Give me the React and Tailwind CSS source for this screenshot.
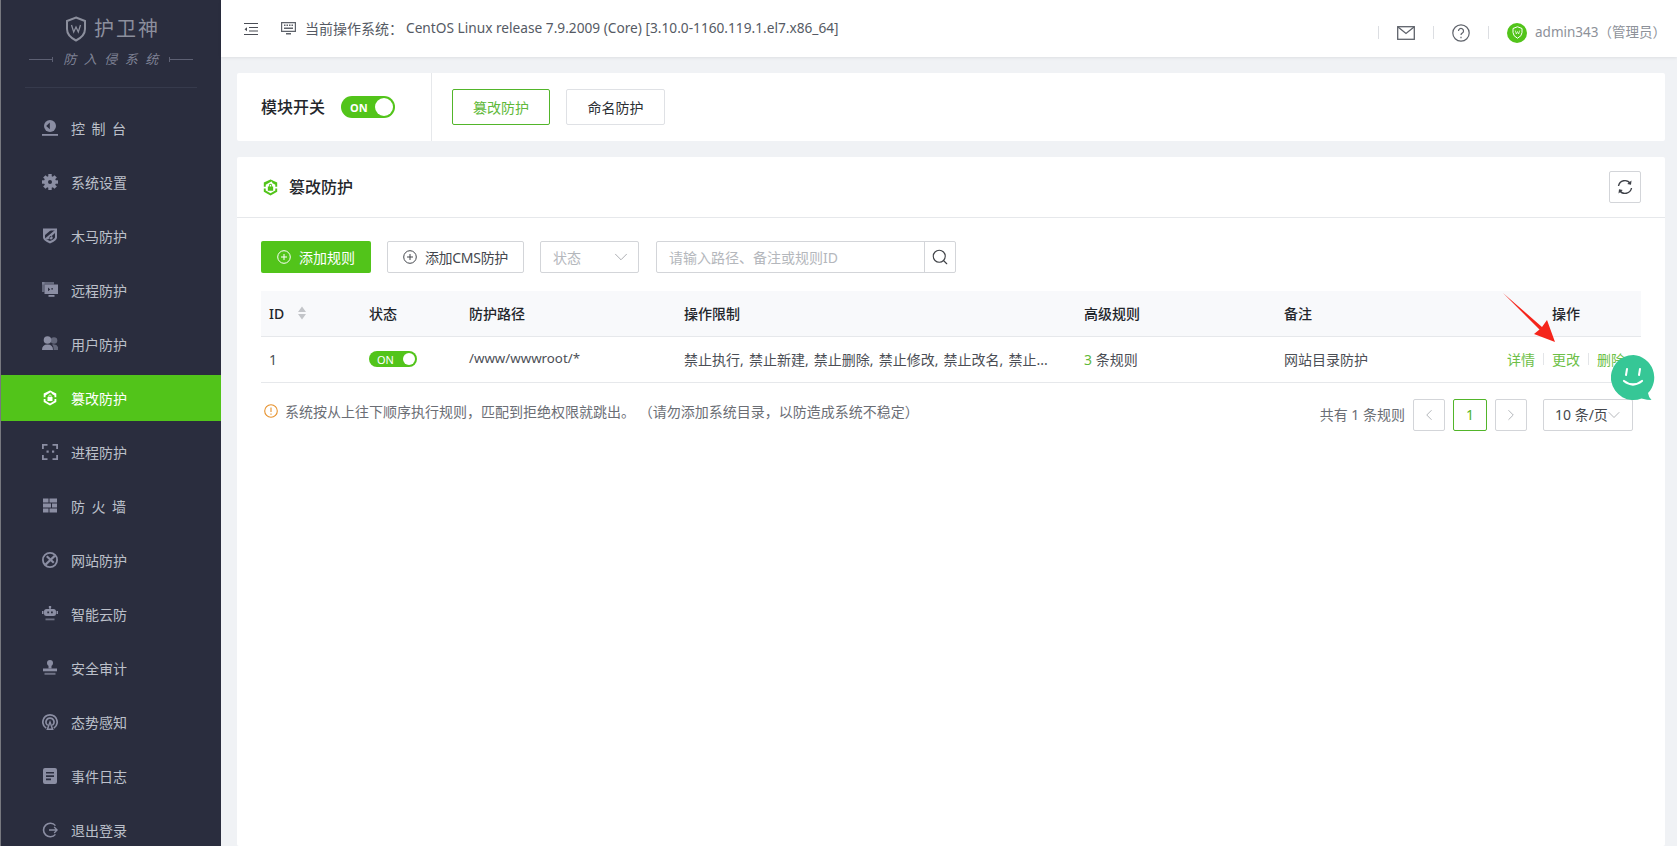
import React from 'react'
import { ChevronDown, ChevronLeft, ChevronRight, Search } from 'lucide-react'

const font = 'font-["Noto_Sans","Noto_Sans_CJK_SC",sans-serif]'

const gearTeeth = [0, 45, 90, 135, 180, 225, 270, 315]

// sidebar icons, all drawn on a 16 box
const icons = {
  console: <><circle cx="8" cy="6" r="6" /><path d="M7.800 2.500L4.200 6L7.800 9.300z" fill="#2a2d3e" /><rect x="0" y="14" width="16" height="1.800" /></>,
  gear: <><circle cx="8" cy="8" r="6" />{gearTeeth.map((a) => <rect key={a} x="6.300" y="0" width="3.400" height="3.500" transform={`rotate(${a} 8 8)`} />)}<circle cx="8" cy="8" r="2" fill="#2a2d3e" /></>,
  shield: <><path fillRule="evenodd" d="M1 0.500h14v9q0 3-7 6q-7-3-7-6z M3 2.500v6.800q0 1.500 5 3.800q5-2.300 5-3.800v-6.800z" /><path d="M3 10.500l10-8.500v3l-7 6.500z M9 8a1.700 1.700 0 1 0 .1 0z M3 2h6l-6 5z" /></>,
  remote: <><rect x="0" y="0" width="12" height="2.500" opacity="0.6" /><rect x="0" y="0" width="2.500" height="10" opacity="0.6" /><path fillRule="evenodd" d="M2.500 2.500h13.500v9.500h-13.500z M6 5.500v3.800l2.200-1.900z M9.300 6.300v1.300h1.700v-1.300z" /><rect x="6.500" y="13" width="6" height="1.800" /></>,
  users: <><circle cx="5.500" cy="4" r="3.800" /><path d="M0 14q0-5.500 5.500-5.500t5.500 5.500z" /><circle cx="12" cy="4.500" r="3.300" opacity="0.6" /><path d="M11.500 14q.5-3.500-1.500-5.500q6.500-1 6.500 5.500z" opacity="0.6" /></>,
  tamper: <><path d="M8 0.500l2 1.200-2 1.100-4.500 2.600v1.800h-1.800v-3.800z" /><path d="M8 0.500l6.300 2.900v3.800h-1.800v-1.800l-2.500-1.500z" /><path d="M1.700 9h1.800v1.800l4.500 2.600 4.500-2.600v-1.800h1.800v3l-6.300 3.600-6.300-3.600z" /><path fillRule="evenodd" d="M5.500 7h1v-1a1.500 1.500 0 0 1 3 0v1h1v4h-5z M7.300 7h1.400v-1a.7.700 0 0 0-1.400 0z" /></>,
  process: <><path d="M0 0h5.500v1.800h-3.700v3.200h-1.800z M10.500 0h5.500v5h-1.800v-3.200h-3.700z M0 11h1.800v3.200h3.700v1.800h-5.500z M14.200 11h1.800v5h-5.500v-1.800h3.700z" /><rect x="4.500" y="6.500" width="2.200" height="2.200" /><rect x="10" y="6.500" width="2.200" height="2.200" /></>,
  wall: <><path d="M1 0.500h5.500v4h-5.500z M7.500 0.500h7.500v4h-7.500z M1 5.500h8v4h-8z M10 5.500h5v4h-5z M1 10.500h5.500v4h-5.500z M7.500 10.500h7.500v4h-7.500z" /></>,
  site: <><path fillRule="evenodd" d="M8 0a8 8 0 1 0 0 16a8 8 0 0 0 0-16z M8 1.800a6.200 6.200 0 1 1 0 12.400a6.200 6.200 0 0 1 0-12.400z" /><path d="M2.500 12l9.500-9 1.700 1.500-9.500 9z" /><path d="M5.500 3.500l7 6.500-1.500 1.500-7-6.500z" /></>,
  robot: <><rect x="7.300" y="0" width="1.400" height="3" /><circle cx="8" cy="1" r="1.300" /><path fillRule="evenodd" d="M4.500 3h7a2.500 2.500 0 0 1 2.500 2.500v2a2.500 2.500 0 0 1-2.500 2.500h-7a2.500 2.500 0 0 1-2.500-2.500v-2a2.500 2.500 0 0 1 2.500-2.500z M5.300 5.500v1.800h1.800v-1.800z M9 5.500v1.800h1.800v-1.800z" /><rect x="0" y="5" width="1.500" height="3" /><rect x="14.500" y="5" width="1.500" height="3" /><rect x="3.500" y="12.500" width="9" height="1.800" opacity="0.7" /></>,
  stamp: <><circle cx="8" cy="3" r="3" /><rect x="6.500" y="4" width="3" height="4.500" /><rect x="1" y="8.500" width="14" height="2.800" /><rect x="2.500" y="12.800" width="11" height="2" opacity="0.7" /></>,
  radar: <><path fillRule="evenodd" d="M8 0a8 8 0 0 0-4.300 14.700l.9-1.400a6.300 6.300 0 1 1 6.800 0l.9 1.400a8 8 0 0 0-4.300-14.700z" /><path fillRule="evenodd" d="M8 3.200a4.800 4.800 0 0 0-2.700 8.800l.8-1.300a3.200 3.200 0 1 1 3.800 0l.8 1.300a4.800 4.800 0 0 0-2.700-8.800z" /><path fillRule="evenodd" d="M8 6l3.700 10h-7.400z M8 10l-1.500 4.400h3z" /></>,
  log: <><path fillRule="evenodd" d="M3 0h10a2 2 0 0 1 2 2v12a2 2 0 0 1-2 2h-10a2 2 0 0 1-2-2v-12a2 2 0 0 1 2-2z M4 4v1.600h8v-1.600z M4 7.300v1.600h8v-1.600z M4 10.600v1.600h5v-1.600z" /></>,
  logout: <><path d="M14 3.200a7.500 7.500 0 1 0 0 9.600l-1.100-.9a6 6 0 1 1 0-7.800z" /><path d="M7 7.300h6.500l-1.800-1.800.9-.9 3.400 3.400-3.400 3.400-.9-.9 1.800-1.800h-6.500z" /></>,
}

const menu = [
  { key: 'console', label: '控制台', spaced: true },
  { key: 'gear', label: '系统设置' },
  { key: 'shield', label: '木马防护' },
  { key: 'remote', label: '远程防护' },
  { key: 'users', label: '用户防护' },
  { key: 'tamper', label: '篡改防护', active: true },
  { key: 'process', label: '进程防护' },
  { key: 'wall', label: '防火墙', spaced: true },
  { key: 'site', label: '网站防护' },
  { key: 'robot', label: '智能云防' },
  { key: 'stamp', label: '安全审计' },
  { key: 'radar', label: '态势感知' },
  { key: 'log', label: '事件日志' },
  { key: 'logout', label: '退出登录' },
]

const ShieldMark = ({ className }) => (
  <svg viewBox="0 0 22 26" fill="none" stroke="currentColor" className={className}>
    <path d="M11 1.500l9 3.500v8q0 7-9 11.500q-9-4.500-9-11.500v-8z" strokeWidth="2" />
    <path d="M6.500 9l2.200 7 2.300-5 2.300 5 2.200-7" strokeWidth="1.300" />
  </svg>
)

const PlusCircle = ({ className }) => (
  <svg viewBox="0 0 14 14" fill="none" stroke="currentColor" strokeWidth="1" className={className}>
    <circle cx="7" cy="7" r="6.300" />
    <path d="M7 4v6M4 7h6" />
  </svg>
)

const Toggle = ({ small }) => (
  <div className={small
    ? 'flex h-[16px] w-[48px] items-center justify-between rounded-full bg-[#52c41a] pl-[8px] pr-[2px]'
    : 'flex h-[22px] w-[54px] items-center justify-between rounded-full bg-[#52c41a] pl-[9px] pr-[2px]'}>
    <span className={small ? 'text-[11px] leading-none text-white' : 'text-[11px] font-bold leading-none text-white'}>ON</span>
    <span className={small ? 'h-[12px] w-[12px] rounded-full bg-white' : 'h-[18px] w-[18px] rounded-full bg-white'} />
  </div>
)

const Sidebar = () => (
  <aside className="flex h-full w-[221px] shrink-0 flex-col overflow-hidden border-l border-[#77787f] bg-[#2a2d3e]">
    <div className="mx-[24px] flex h-[88px] shrink-0 flex-col items-center border-b border-[#363a4c] pt-[15px]">
      <div className="flex h-[28px] items-center pl-[3px] text-[#8c8f9d]">
        <ShieldMark className="h-[26px] w-[22px]" />
        <span className="ml-[7px] text-[20px] leading-none tracking-[2px]">护卫神</span>
      </div>
      <div className="mt-[7px] flex items-center text-[#7f8295]">
        <span className="h-px w-[23px] bg-[#5d6073]" />
        <span className="h-[5px] w-px bg-[#5d6073]" />
        <span className="ml-[10px] mr-[3px] text-[13px] italic leading-[18px] tracking-[7.500px]">防入侵系统</span>
        <span className="h-[5px] w-px bg-[#5d6073]" />
        <span className="h-px w-[23px] bg-[#5d6073]" />
      </div>
    </div>
    <nav className="mt-[17px] flex flex-col gap-2">
      {menu.map((m) => (
        <div key={m.key} className={m.active
          ? 'flex h-[46px] shrink-0 items-center bg-[#52c41a] pl-[41px] text-white'
          : 'flex h-[46px] shrink-0 items-center pl-[41px] text-[#bcc0ca]'}>
          <svg viewBox="0 0 16 16" fill="currentColor" className={m.active ? 'h-[16px] w-[16px] text-white' : 'h-[16px] w-[16px] text-[#8b8ea3]'}>
            {icons[m.key]}
          </svg>
          <span className={m.spaced ? 'ml-[13px] text-[14px] tracking-[6.500px]' : 'ml-[13px] text-[14px]'}>{m.label}</span>
        </div>
      ))}
    </nav>
  </aside>
)

const Topbar = () => (
  <header className="flex h-[57px] shrink-0 items-center bg-white pl-[22px] pr-[11px] text-[#555a64] shadow-[0_1px_3px_rgba(0,0,0,0.08)]">
    <svg viewBox="0 0 16 14" fill="none" stroke="#4a4d55" strokeWidth="1.200" className="h-[14px] w-[16px]">
      <path d="M1 1.500h14M6 5.500h9M6 9h9M1 12.500h14" />
      <path d="M4 5.200L1.500 7.200L4 9.200z" fill="#4a4d55" stroke="none" />
    </svg>
    <svg viewBox="0 0 15 15" className="ml-[22px] h-[15px] w-[15px] text-[#5f636b]" fill="currentColor">
      <path fillRule="evenodd" d="M0 1h15v10h-15z M1.200 2.200v7.600h12.600v-7.600z" />
      <path d="M3 3.500h1.500v1.500h-1.500z M5.500 3.500h1.500v1.500h-1.500z M8 3.500h1.500v1.500h-1.500z M10.500 3.500h1.500v1.500h-1.500z M3 6.500h9v1.500h-9z M5 12h5v1.500h-5z" />
    </svg>
    <span className="ml-[9px] text-[14px]">当前操作系统：</span>
    <span className="ml-[3px] text-[13.700px]">CentOS Linux release 7.9.2009 (Core) [3.10.0-1160.119.1.el7.x86_64]</span>
    <div className="ml-auto mt-[8px] flex items-center">
      <span className="h-[13px] w-px bg-[#dcdee2]" />
      <svg viewBox="0 0 18 14" fill="none" stroke="#5f636b" strokeWidth="1.300" className="ml-[18px] h-[14px] w-[18px]">
        <rect x="0.700" y="0.700" width="16.600" height="12.600" />
        <path d="M1 1l8 6.500L17 1" />
      </svg>
      <span className="ml-[18px] h-[13px] w-px bg-[#dcdee2]" />
      <svg viewBox="0 0 18 18" fill="none" stroke="#5f636b" strokeWidth="1.200" className="ml-[18px] h-[18px] w-[18px]">
        <circle cx="9" cy="9" r="8.200" />
        <path d="M6.500 7a2.500 2.500 0 1 1 3.800 2.100q-1.300.8-1.300 2" />
        <path d="M9 12.800v1.400" />
      </svg>
      <span className="ml-[18px] h-[13px] w-px bg-[#dcdee2]" />
      <div className="ml-[18px] flex h-[20px] w-[20px] items-center justify-center rounded-full bg-[#52c41a] text-white">
        <ShieldMark className="h-[13px] w-[11px]" />
      </div>
      <span className="ml-[8px] text-[13.500px] text-[#8d9199]">admin343（管理员）</span>
    </div>
  </header>
)

const ModuleCard = () => (
  <section className="flex h-[68px] shrink-0 items-center rounded-[2px] bg-white">
    <div className="flex h-full w-[195px] shrink-0 items-center border-r border-[#e6e8eb] pl-[24px]">
      <span className="text-[16px] font-medium text-[#23262b]">模块开关</span>
      <div className="ml-[16px]"><Toggle /></div>
    </div>
    <button className="ml-[20px] flex h-[36px] w-[98px] items-center justify-center rounded-[2px] border border-[#52b52a] text-[14px] text-[#5fb93a]">篡改防护</button>
    <button className="ml-[16px] flex h-[36px] w-[99px] items-center justify-center rounded-[2px] border border-[#dfe1e5] text-[14px] text-[#2b2e33]">命名防护</button>
  </section>
)

const Toolbar = () => (
  <div className="flex h-[32px] items-center text-[14px]">
    <button className="flex h-[32px] w-[110px] items-center justify-center rounded-[2px] bg-[#52c41a] text-white">
      <PlusCircle className="mr-[8px] h-[14px] w-[14px]" />添加规则
    </button>
    <button className="ml-[16px] flex h-[32px] w-[137px] items-center justify-center rounded-[2px] border border-[#d3d5d9] text-[#44474d]">
      <PlusCircle className="mr-[8px] h-[14px] w-[14px]" /><span className="tracking-[-0.300px]">添加CMS防护</span>
    </button>
    <div className="ml-[16px] flex h-[32px] w-[99px] items-center justify-between rounded-[2px] border border-[#d3d5d9] pl-[12px] pr-[6px] text-[#b4b7bc]">
      <span>状态</span>
      <ChevronDown size={22} strokeWidth={0.800} className="text-[#8f9298]" />
    </div>
    <div className="ml-[17px] flex h-[32px] w-[300px] items-center rounded-[2px] border border-[#d3d5d9] text-[#b4b7bc]">
      <span className="flex-1 pl-[12px]">请输入路径、备注或规则ID</span>
      <span className="flex h-full w-[31px] items-center justify-center border-l border-[#d3d5d9]">
        <Search size={18} strokeWidth={1.500} className="text-[#3f4247]" />
      </span>
    </div>
  </div>
)

const RuleTable = () => (
  <table className="mt-[18px] w-full table-fixed border-collapse text-left text-[14px]">
    <colgroup>
      <col className="w-[100px]" />
      <col className="w-[100px]" />
      <col className="w-[215px]" />
      <col className="w-[400px]" />
      <col className="w-[200px]" />
      <col className="w-[215px]" />
      <col className="w-[150px]" />
    </colgroup>
    <thead>
      <tr className="h-[45px] border-b border-[#e6e8eb] bg-[#f8f9fb] text-[#23262b]">
        <th className="pl-[8px] font-medium">
          <span className="flex items-center">
            ID
            <svg viewBox="0 0 8 14" className="ml-[14px] h-[14px] w-[8px]" fill="#c3c5c9">
              <path d="M4 0.500L8 6H0z M0 8h8L4 13.500z" />
            </svg>
          </span>
        </th>
        <th className="pl-[8px] font-medium">状态</th>
        <th className="pl-[8px] font-medium">防护路径</th>
        <th className="pl-[8px] font-medium">操作限制</th>
        <th className="pl-[8px] font-medium">高级规则</th>
        <th className="pl-[8px] font-medium">备注</th>
        <th className="text-center font-medium">操作</th>
      </tr>
    </thead>
    <tbody>
      <tr className="h-[46px] border-b border-[#e6e8eb] text-[#4b4e55]">
        <td className="pl-[8px]">1</td>
        <td className="pl-[8px]"><Toggle small /></td>
        <td className="pl-[8px] text-[13.300px]">/www/wwwroot/*</td>
        <td className="pl-[8px] [word-spacing:1.500px]">禁止执行, 禁止新建, 禁止删除, 禁止修改, 禁止改名, 禁止...</td>
        <td className="pl-[8px]"><span className="text-[#5fb93a]">3</span> 条规则</td>
        <td className="pl-[8px]">网站目录防护</td>
        <td>
          <div className="flex items-center justify-center text-[#6dbf47]">
            详情<span className="mx-[8px] h-[12px] w-px bg-[#e3e5e8]" />更改<span className="mx-[8px] h-[12px] w-px bg-[#e3e5e8]" />删除
          </div>
        </td>
      </tr>
    </tbody>
  </table>
)

const Footer = () => (
  <div className="mt-[16px] flex items-start justify-between">
    <div className="mt-[2px] flex items-center pl-[3px] text-[14px] text-[#6b6e75]">
      <svg viewBox="0 0 14 14" fill="none" stroke="#e6912c" strokeWidth="1.100" className="mr-[7px] h-[14px] w-[14px]">
        <circle cx="7" cy="7" r="6.300" />
        <path d="M7 3.500v4.500M7 9.500v1.200" />
      </svg>
      <span className="whitespace-pre">系统按从上往下顺序执行规则，匹配到拒绝权限就跳出。 （请勿添加系统目录，以防造成系统不稳定）</span>
    </div>
    <div className="mr-[8px] flex h-[32px] items-center text-[14px] text-[#6b6e75]">
      <span>共有 1 条规则</span>
      <span className="ml-[8px] flex h-[32px] w-[32px] items-center justify-center rounded-[2px] border border-[#d3d5d9] text-[#9a9da3]"><ChevronLeft size={18} strokeWidth={1} /></span>
      <span className="ml-[8px] flex h-[32px] w-[34px] items-center justify-center rounded-[2px] border border-[#52b52a] text-[#52b52a]">1</span>
      <span className="ml-[8px] flex h-[32px] w-[32px] items-center justify-center rounded-[2px] border border-[#d3d5d9] text-[#9a9da3]"><ChevronRight size={18} strokeWidth={1} /></span>
      <span className="ml-[16px] flex h-[32px] w-[90px] items-center rounded-[2px] border border-[#d3d5d9] pl-[11px] text-[#44474d]">
        <span className="shrink-0">10 条/页</span><ChevronDown size={20} strokeWidth={0.800} className="-ml-[4px] shrink-0 text-[#8f9298]" />
      </span>
    </div>
  </div>
)

const App = () => {
  return (
    <div className={`${font} relative flex h-screen w-full overflow-hidden bg-[#f0f2f5]`}>
      <Sidebar />
      <main className="flex min-w-0 flex-1 flex-col">
        <Topbar />
        <div className="flex flex-1 flex-col gap-4 pb-0 pl-[16px] pr-[12px] pt-[16px]">
          <ModuleCard />
          <section className="flex-1 rounded-[2px] bg-white">
            <div className="flex h-[61px] items-center justify-between border-b border-[#e6e8eb] pl-[25px] pr-[24px]">
              <div className="flex items-center">
                <svg viewBox="0 0 16 16" fill="#52c41a" className="h-[17px] w-[17px]">{icons.tamper}</svg>
                <span className="ml-[10px] text-[16px] font-medium text-[#23262b]">篡改防护</span>
              </div>
              <button className="flex h-[32px] w-[32px] items-center justify-center rounded-[2px] border border-[#d3d5d9]">
                <svg viewBox="0 0 16 16" fill="none" stroke="#3d4047" strokeWidth="1.400" className="h-[16px] w-[16px]">
                  <path d="M1.500 7a6.500 6.500 0 0 1 11.800-2.500M14.500 9a6.500 6.500 0 0 1-11.800 2.500" />
                  <path d="M14.500 1.500L14 5.800L10.200 5z M1.500 14.500L2 10.200L5.800 11z" fill="#3d4047" stroke="none" />
                </svg>
              </button>
            </div>
            <div className="px-[24px] pt-[23px]">
              <Toolbar />
              <RuleTable />
              <Footer />
            </div>
          </section>
        </div>
      </main>
      {/* annotation arrow laid over the table */}
      <svg viewBox="0 0 60 56" className="pointer-events-none absolute left-[1501px] top-[292px] h-[56px] w-[60px]">
        <path d="M2 1L41 35L46 28L54 50L33 42L38.500 37.500z" fill="#f5251b" />
      </svg>
      {/* chat bubble */}
      <div className="absolute left-[1611px] top-[355px] h-[45px] w-[45px]">
        <svg viewBox="0 0 45 46" className="h-[46px] w-[45px]">
          <path d="M22.500 0a22.500 22.500 0 1 0 8 43.500q6 1.500 10 1.500q-3-3-3.500-7a22.500 22.500 0 0 0-14.500-38z" fill="#36c796" />
          <path d="M16 14l-1 6M29 14l-1 6" stroke="#fff" strokeWidth="2" strokeLinecap="round" />
          <path d="M13 26q9 7 18 0" stroke="#fff" strokeWidth="2.200" fill="none" strokeLinecap="round" />
        </svg>
      </div>
    </div>
  )
}

export default App
